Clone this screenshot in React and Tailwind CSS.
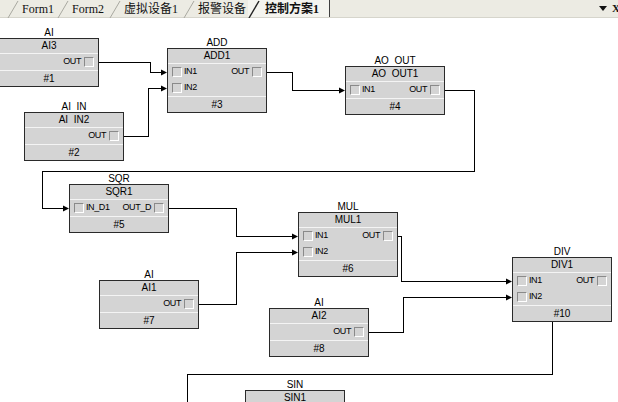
import React from 'react'

const T = 18

const blocks = [
  { x: -1, y: 38, type: 'AI', name: 'AI3', num: '#1', ins: [] },
  { x: 24, y: 112, type: 'AI  IN', name: 'AI  IN2', num: '#2', ins: [] },
  { x: 167, y: 48, type: 'ADD', name: 'ADD1', num: '#3', ins: ['IN1', 'IN2'] },
  { x: 345, y: 66, type: 'AO  OUT', name: 'AO  OUT1', num: '#4', ins: ['IN1'] },
  { x: 69, y: 184, type: 'SQR', name: 'SQR1', num: '#5', ins: ['IN_D1'], out: 'OUT_D' },
  { x: 298, y: 212, type: 'MUL', name: 'MUL1', num: '#6', ins: ['IN1', 'IN2'] },
  { x: 99, y: 280, type: 'AI', name: 'AI1', num: '#7', ins: [] },
  { x: 269, y: 308, type: 'AI', name: 'AI2', num: '#8', ins: [] },
  { x: 512, y: 257, type: 'DIV', name: 'DIV1', num: '#10', ins: ['IN1', 'IN2'] },
  { x: 245, y: 390, type: 'SIN', name: 'SIN1', num: '#9', ins: ['IN1'] },
]

const wires = [
  'M99 62.5 H150.5 V72.5 H163',
  'M124 136.5 H148.5 V88.5 H163',
  'M267 72.5 H292.5 V90.5 H341',
  'M445 90.5 H474.5 V171.5 H42.5 V208.5 H65',
  'M169 208.5 H236.5 V236.5 H294',
  'M199 304.5 H236.5 V252.5 H294',
  'M398 236.5 H401.5 V281.5 H508',
  'M369 332.5 H403.5 V297.5 H508',
  'M552.5 322 V374.5 H187.5 V402',
]

const arrows = [
  [167, 72], [167, 88], [345, 90], [69, 208], [298, 236], [298, 252], [512, 281], [512, 297],
]

const Check = () => (
  <span className="inline-block w-[10px] h-[10px] border border-t-[#8a8a8a] border-l-[#8a8a8a] border-b-white border-r-white" />
)

const Port = ({ label, out }) => (
  <div className="h-[16px] flex items-center justify-between px-[4px]">
    {label ? (
      <div className="flex items-center gap-[2px]">
        <Check />
        <span>{label}</span>
      </div>
    ) : <span />}
    {out ? (
      <div className="flex items-center gap-[3px]">
        <span>{out}</span>
        <Check />
      </div>
    ) : <span />}
  </div>
)

const Block = ({ b }) => {
  const rows = b.ins.length ? b.ins : [null]
  return (
    <div className="absolute w-[100px] flex flex-col" style={{ left: b.x, top: b.y - T - 11 }}>
      <div className="h-[11px] leading-[11px] text-center text-[10px] whitespace-pre text-black">{b.type}</div>
      <div className="border border-[#2a2a2a] bg-[#d4d4d4] text-black">
        <div className="h-[14px] leading-[14px] text-center text-[10px] whitespace-pre">{b.name}</div>
        <div className="border-t border-[#f4f4f4] text-[9px] tracking-[-0.4px]">
          {rows.map((r, i) => (
            <Port key={i} label={r} out={i === 0 ? b.out || 'OUT' : null} />
          ))}
        </div>
        <div className="h-[16px] leading-[15px] border-t border-[#f4f4f4] text-center text-[10px]">{b.num}</div>
      </div>
    </div>
  )
}

const Slash = ({ bold }) => (
  <svg width="12" height="18" className="shrink-0">
    <line x1="1" y1="18" x2="11" y2="1" stroke={bold ? '#222' : '#a8a8a0'} strokeWidth={bold ? 1.4 : 1} />
  </svg>
)

const tabs = [
  { label: 'Form1', w: 'w-[50px]' },
  { label: 'Form2', w: 'w-[52px]' },
  { label: '虚拟设备1', w: 'w-[74px]' },
  { label: '报警设备', w: 'w-[65px]' },
]

export default function App() {
  return (
    <div className="w-[618px] h-[402px] overflow-hidden bg-white flex flex-col" style={{ fontFamily: '"Liberation Sans", Arial, sans-serif' }}>
      <div className="h-[18px] shrink-0 flex items-stretch bg-[#ecebe3] border-b border-[#d6d5cc] pl-[7px] text-[12px] text-[#111]" style={{ fontFamily: '"Liberation Serif", "Noto Sans CJK SC", serif' }}>
        {tabs.map((t) => (
          <div key={t.label} className={`${t.w} flex items-center`}>
            <Slash />
            <span className="pl-[3px] leading-none">{t.label}</span>
          </div>
        ))}
        <div className="w-[82px] flex items-center bg-[#f4f4ef] border-r border-[#404040]">
          <Slash bold />
          <span className="pl-[5px] font-bold leading-none">控制方案1</span>
        </div>
        <div className="flex-1 flex items-center justify-end gap-[5px]">
          <svg width="8" height="5"><path d="M0 0 H8 L4 5 Z" fill="#111" /></svg>
          <span className="w-[6px] overflow-hidden text-[11px] font-bold leading-none">X</span>
        </div>
      </div>
      <div className="relative flex-1">
        <svg className="absolute left-0 top-0" width="618" height="384" viewBox="0 18 618 384" shapeRendering="crispEdges">
          {wires.map((d, i) => (
            <path key={i} d={d} fill="none" stroke="#000" strokeWidth="1" />
          ))}
          {arrows.map(([x, y], i) => (
            <path key={i} d={`M${x - 6} ${y - 2.5} L${x} ${y + 0.5} L${x - 6} ${y + 3.5} Z`} fill="#000" shapeRendering="auto" />
          ))}
        </svg>
        {blocks.map((b) => (
          <Block key={b.num} b={b} />
        ))}
      </div>
    </div>
  )
}
